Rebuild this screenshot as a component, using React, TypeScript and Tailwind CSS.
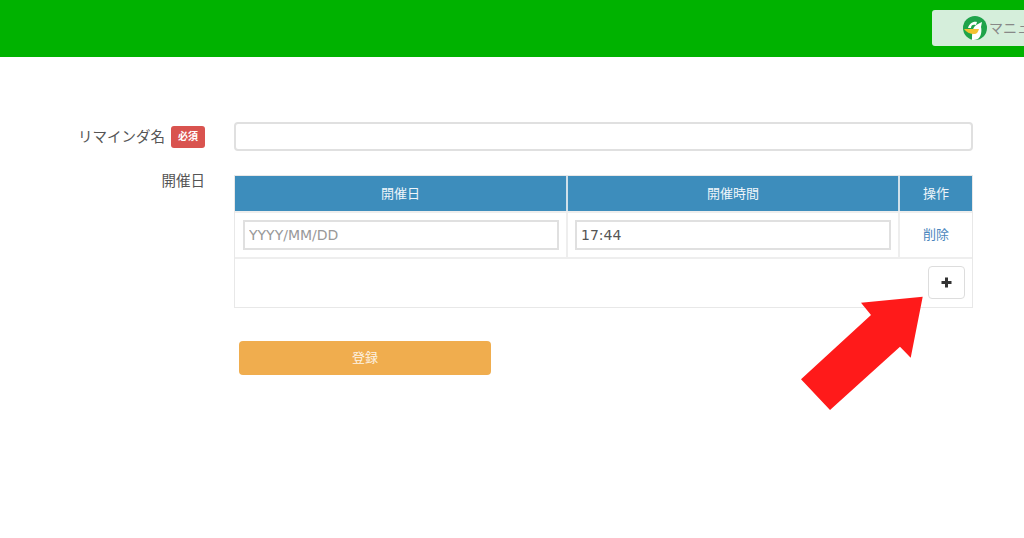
const font = { fontFamily: "'DejaVu Sans', 'Noto Sans CJK JP', sans-serif" };

function Logo() {
  return (
    <svg width="24" height="24" viewBox="0 0 24 24" className="shrink-0">
      <circle cx="12" cy="12" r="12" fill="#1fa34a" />
      <path d="M9 24c0-5 0-11 3-14 2-2 5-3 7-4l-1 5c1 4 0 9-2 11-2 2-5 2-7 2z" fill="#fff" />
      <path d="M5 12c1-4 5-7 9-6l-1 3c-3-1-5 0-5 3z" fill="#fff" />
      <path d="M1 13h15c-1 3-2 5-5 5-4 0-8-2-10-5z" fill="#f2c230" />
    </svg>
  );
}

export default function App() {
  return (
    <div className="relative h-[538px] w-full overflow-hidden bg-white text-[14px] text-[#555]" style={font}>
      <header className="flex h-[57px] items-start justify-start overflow-hidden bg-[#00b200] pl-[932px] pt-[10px]">
        <div className="flex h-[36px] w-[140px] shrink-0 items-center gap-[2px] rounded-[3px] bg-[#d5eedb] pl-[31px] text-[14px] text-[#888]">
          <Logo />
          <span className="whitespace-nowrap">マニュアル</span>
        </div>
      </header>

      <main className="pt-[65px]">
        <div className="flex items-center">
          <div className="flex w-[205px] items-center justify-end gap-[6px]">
            <span className="text-[14.500px] leading-[22px]">リマインダ名</span>
            <span className="flex h-[22px] w-[34px] items-center justify-center rounded-[3px] bg-[#d9534f] text-[10px] font-bold text-white">
              必須
            </span>
          </div>
          <input className="ml-[29px] h-[29px] w-[739px] rounded-[4px] border-2 border-[#e0e0e0] bg-white" />
        </div>

        <div className="mt-[24px] flex items-start">
          <div className="-mt-[1px] w-[205px] text-right text-[14.500px] leading-[14px] text-[#555]">開催日</div>
          <div className="ml-[29px] w-[739px] border border-[#e8e8e8]">
            <div className="grid h-[35px] grid-cols-[333px_332px_1fr] bg-[#3d8dbc] text-[13px] text-[#eef5fa]">
              <div className="flex items-center justify-center border-r-2 border-[#cfe0ea]">開催日</div>
              <div className="flex items-center justify-center border-r-2 border-[#cfe0ea]">開催時間</div>
              <div className="flex items-center justify-center">操作</div>
            </div>
            <div className="grid h-[48px] grid-cols-[333px_332px_1fr] border-y-2 border-[#eee]">
              <div className="flex items-center border-r-2 border-[#eee] pl-[8px]">
                <input
                  placeholder="YYYY/MM/DD"
                  className="h-[30px] w-[316px] border-2 border-[#e0e0e0] px-[4px] text-[14px] placeholder:text-[#999]"
                  style={font}
                />
              </div>
              <div className="flex items-center border-r-2 border-[#eee] pl-[7px]">
                <input
                  defaultValue="17:44"
                  className="h-[30px] w-[316px] border-2 border-[#e0e0e0] px-[4px] text-[14px] text-[#555]"
                  style={font}
                />
              </div>
              <div className="flex items-center justify-center text-[13px] text-[#4a86bd]">削除</div>
            </div>
            <div className="flex h-[48px] justify-end pr-[7px] pt-[7px]">
              <button className="flex h-[33px] w-[37px] items-center justify-center rounded-[4px] border border-[#ddd] bg-white">
                <svg width="11" height="11" viewBox="0 0 11 11">
                  <path d="M4 .5h3v3.500h3.500v3H7v3.500H4V7H.5V4H4z" fill="#333" />
                </svg>
              </button>
            </div>
          </div>
        </div>

        <div className="ml-[239px] mt-[33px]">
          <button className="h-[34px] w-[252px] rounded-[4px] bg-[#f0ad4e] text-[13px] text-[#fdf3e4]">登録</button>
        </div>
      </main>

      <svg className="pointer-events-none absolute left-[800px] top-[296px]" width="124" height="115" viewBox="800 296 124 115">
        <path d="M922.700 296.700 861 302.700 871 315 801 379.300 830 410 900 346.700 910.700 357.700z" fill="#ff1a1a" />
      </svg>
    </div>
  );
}
